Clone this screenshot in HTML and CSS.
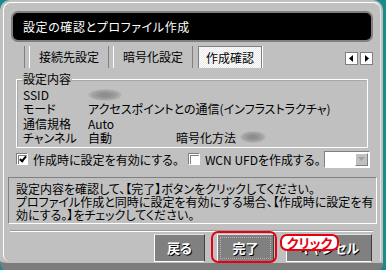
FILE: index.html
```html
<!DOCTYPE html>
<html lang="ja">
<head>
    <meta charset="UTF-8">
    <title>設定の確認とプロファイル作成</title>
    <link rel="stylesheet" href="styles.css">
</head>
<body>
    <div class="window">
        <div class="frame">
            <div class="titlebar">設定の確認とプロファイル作成</div>

            <div class="tabrow">
                <div class="tabs">
                    <div class="tab tab-cut">設定確認</div>
                    <div class="tab">接続先設定</div>
                    <div class="tab">暗号化設定</div>
                    <div class="tab active">作成確認</div>
                </div>
                <div class="scroll">
                    <span class="arrow"><svg width="5" height="7" viewBox="0 0 5 7"><path d="M4 0V7L0 3.5Z" fill="#000"/></svg></span>
                    <span class="arrow"><svg width="5" height="7" viewBox="0 0 5 7"><path d="M1 0V7L5 3.5Z" fill="#000"/></svg></span>
                </div>
            </div>

            <fieldset class="group">
                <legend>設定内容</legend>
                <div class="row">
                    <span class="label">SSID</span>
                    <span class="blur ssid"></span>
                </div>
                <div class="row">
                    <span class="label">モード</span>
                    <span>アクセスポイントとの通信(インフラストラクチャ)</span>
                </div>
                <div class="row">
                    <span class="label">通信規格</span>
                    <span>Auto</span>
                </div>
                <div class="row">
                    <span class="label">チャンネル</span>
                    <span class="channel">自動</span>
                    <span>暗号化方法</span>
                    <span class="blur enc"></span>
                </div>
            </fieldset>

            <div class="options">
                <label class="check"><span class="box checked"></span>作成時に設定を有効にする。</label>
                <label class="check second"><span class="box"></span>WCN UFDを作成する。</label>
                <div class="combo"><span class="drop"><svg width="7" height="4" viewBox="0 0 7 4"><path d="M0 0H7L3.5 4Z" fill="#a0a0a0"/></svg></span></div>
            </div>

            <div class="info">
                設定内容を確認して、【完了】ボタンをクリックしてください。<br>
                プロファイル作成と同時に設定を有効にする場合、【作成時に設定を有<br>
                効にする。】をチェックしてください。
            </div>

            <div class="sep"></div>

            <div class="buttons">
                <div class="btn back">戻る</div>
                <div class="btn done"><span class="focus">完了</span></div>
                <div class="btn cancel">キャンセル</div>
            </div>
        </div>

        <div class="highlight"></div>
        <div class="badge">クリック</div>
    </div>
</body>
</html>
```

FILE: styles.css
```css
body {
    margin: 0;
    width: 386px;
    height: 270px;
    overflow: hidden;
    background: #1b8a88;
    font-family: "Noto Sans CJK JP", "Noto Sans", sans-serif;
    font-size: 12px;
    font-feature-settings: "palt";
    color: #000;
}

.window {
    position: relative;
    width: 383px;
    height: 263px;
    background: #c0c0c0;
    border-bottom: 10px solid #7c7c7c;
    border-radius: 10px 10px 10px 12px;
}

.frame {
    position: relative;
    top: 2px;
    left: 3px;
    width: 376px;
    height: 258px;
    border-top: 1px solid #fff;
    border-left: 1px solid #fff;
    border-right: 1px solid #e4e4e4;
    border-radius: 8px 8px 0 6px;
}

.titlebar {
    margin: 8px 7px 0 7px;
    height: 27px;
    background: #000;
    border: 2px solid #808080;
    border-radius: 7px;
    color: #fff;
    line-height: 27px;
    padding-left: 10px;
    letter-spacing: 0.6px;
}

/* tabs */
.tabrow {
    display: flex;
    margin: 4px 7px 0 7px;
    height: 22px;
}

.tabs {
    flex: 1;
    display: flex;
    gap: 4px;
    overflow: hidden;
}

.tab {
    flex: none;
    width: 80px;
    height: 22px;
    line-height: 21px;
    text-align: center;
    border-left: 1px solid #fff;
    border-right: 1px solid #808080;
    box-sizing: border-box;
}

.tab-cut {
    margin-left: -66px;
}

.tab.active {
    width: 64px;
    margin-left: 1px;
    background-color: #fff;
    background-image: repeating-conic-gradient(#e8e8e8 0 25%, #fff 0 50%);
    background-size: 2px 2px;
    border: 1px solid #808080;
    border-bottom: none;
    box-shadow: 1px 0 0 #fff;
}

.scroll {
    display: flex;
    gap: 2px;
    margin-top: 6px;
    margin-left: 2px;
}

.arrow {
    display: flex;
    align-items: center;
    justify-content: center;
    width: 13px;
    height: 13px;
    background: #fff;
    border: 1px solid #808080;
    box-sizing: border-box;
}

/* settings group */
.group {
    margin: 5px 12px 0 12px;
    padding: 3px 0 0 6px;
    height: 75px;
    border: 1px solid #fff;
    box-shadow: inset 1px 1px 0 #a8a8a8;
    box-sizing: border-box;
}

.group legend {
    padding: 0 1px;
    margin-left: -1px;
    line-height: 12px;
}

.row {
    display: flex;
    height: 14.4px;
    line-height: 14px;
    white-space: nowrap;
}

.label {
    width: 65px;
}

.channel {
    width: 88px;
}

.blur {
    display: inline-block;
    border-radius: 50%;
    background: radial-gradient(ellipse at center, #8e8e8e 20%, #a6a6a6 55%, rgba(192,192,192,0) 75%);
}

.blur.ssid {
    width: 34px;
    height: 12px;
    margin-top: 1px;
}

.blur.enc {
    width: 26px;
    height: 12px;
    margin-left: 4px;
}

/* checkbox row */
.options {
    display: flex;
    align-items: center;
    margin: 3px 0 0 13px;
    height: 16px;
    white-space: nowrap;
}

.check {
    display: flex;
    align-items: center;
    gap: 5px;
}

.check.second {
    margin-left: 10px;
}

.box {
    width: 9px;
    height: 9px;
    background: #fff;
    border: 1px solid #fff;
    box-shadow: inset 1px 1px 0 #808080, -1px -1px 0 #808080;
    position: relative;
}

.box.checked::after {
    content: "";
    position: absolute;
    left: 3px;
    top: 0px;
    width: 2px;
    height: 5px;
    border: solid #000;
    border-width: 0 2px 2px 0;
    transform: rotate(40deg);
}

.combo {
    display: flex;
    justify-content: flex-end;
    align-items: center;
    margin-left: 3px;
    width: 44px;
    height: 15px;
    background: #fff;
    border: 1px solid #808080;
    border-right-color: #fff;
    border-bottom-color: #fff;
}

.drop {
    display: flex;
    align-items: center;
    justify-content: center;
    width: 13px;
    height: 13px;
    margin-right: 1px;
    background: #c0c0c0;
    border: 1px solid #fff;
    border-right-color: #808080;
    border-bottom-color: #808080;
    box-sizing: border-box;
}

/* info text */
.info {
    margin: 10px 3px 0 4px;
    height: 41px;
    padding: 4px 0 0 7px;
    border: 1px solid #808080;
    border-right-color: #fff;
    border-bottom-color: #fff;
    line-height: 13px;
    white-space: nowrap;
}

.sep {
    margin: 6px 7px 0 6px;
    height: 0;
    border-top: 1px solid #9a9a9a;
    border-bottom: 1px solid #fff;
}

/* buttons */
.buttons {
    display: flex;
    justify-content: flex-end;
    gap: 12px;
    margin: 2px 8px 0 0;
}

.btn {
    height: 26px;
    line-height: 26px;
    text-align: center;
    background: #808080;
    color: #fff;
    font-weight: bold;
    font-size: 13px;
    text-shadow: 1px 1px 0 #000;
    border: 1px solid #fff;
    border-right-color: #404040;
    border-top-color: #e0e0e0;
}

.btn.back {
    width: 49px;
}

.btn.done {
    width: 51px;
    display: flex;
    padding: 2px;
    height: 22px;
}

.btn.done .focus {
    flex: 1;
    line-height: 20px;
    border: 1px dotted #b0b0b0;
}

.btn.cancel {
    width: 84px;
}

/* overlays */
.highlight {
    position: absolute;
    left: 211px;
    top: 231px;
    width: 62px;
    height: 28px;
    border: 2px solid #e60012;
    border-radius: 7px;
}

.badge {
    position: absolute;
    left: 280px;
    top: 234px;
    width: 55px;
    height: 13px;
    line-height: 13px;
    text-align: center;
    background: #fff;
    border: 2px solid #e60012;
    border-radius: 7px;
    color: #e60012;
    font-weight: bold;
    font-size: 13px;
}
```
